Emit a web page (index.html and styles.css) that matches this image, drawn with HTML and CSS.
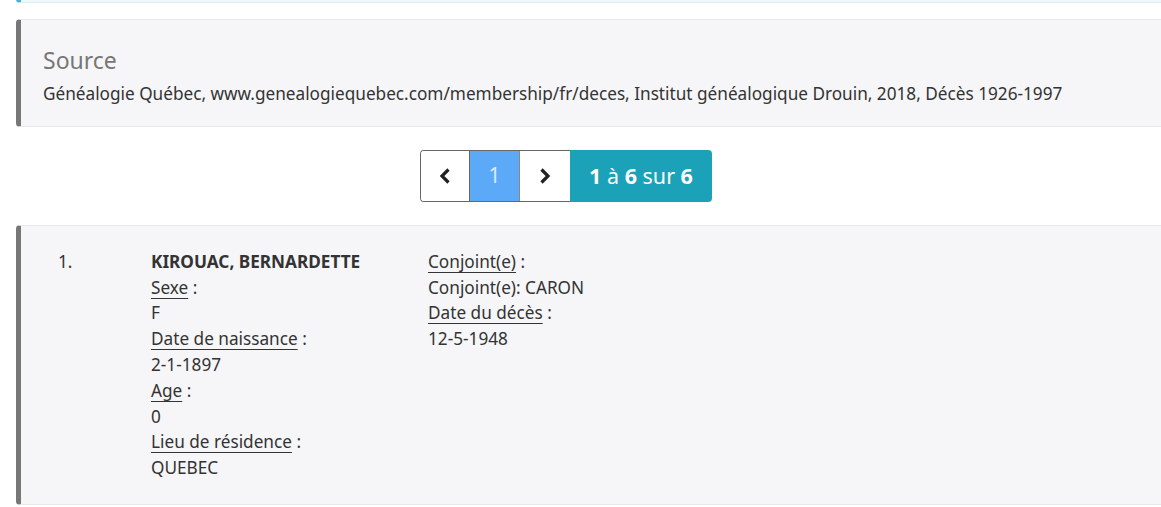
FILE: index.html
```html
<!DOCTYPE html>
<html lang="fr">
<head>
    <meta charset="UTF-8">
    <title>Décès 1926-1997</title>
    <link rel="stylesheet" href="styles.css">
</head>
<body>
    <div class="page">
        <div class="callout callout-info"></div>

        <div class="callout">
            <h4>Source</h4>
            <p>Généalogie Québec, www.genealogiequebec.com/membership/fr/deces, Institut généalogique Drouin, 2018, Décès 1926-1997</p>
        </div>

        <div class="pager">
            <div class="pager-group">
                <span class="pager-btn">
                    <svg width="16" height="20" viewBox="0 0 16 20"><polyline points="11.5,3.5 5,10 11.5,16.5" fill="none" stroke="#222" stroke-width="3.2"/></svg>
                </span>
                <span class="pager-btn active">1</span>
                <span class="pager-btn">
                    <svg width="16" height="20" viewBox="0 0 16 20"><polyline points="4.5,3.5 11,10 4.5,16.5" fill="none" stroke="#222" stroke-width="3.2"/></svg>
                </span>
            </div>
            <span class="pager-count"><span><b>1</b> à <b>6</b> sur <b>6</b></span></span>
        </div>

        <div class="callout record">
            <div class="rec-num">1.</div>
            <div class="rec-col">
                <div class="rec-name">KIROUAC, BERNARDETTE</div>
                <div><span class="lbl">Sexe</span> :</div>
                <div>F</div>
                <div><span class="lbl">Date de naissance</span> :</div>
                <div>2-1-1897</div>
                <div><span class="lbl">Age</span> :</div>
                <div>0</div>
                <div><span class="lbl">Lieu de résidence</span> :</div>
                <div>QUEBEC</div>
            </div>
            <div class="rec-col">
                <div><span class="lbl">Conjoint(e)</span> :</div>
                <div>Conjoint(e): CARON</div>
                <div><span class="lbl">Date du décès</span> :</div>
                <div>12-5-1948</div>
            </div>
        </div>
    </div>
</body>
</html>
```

FILE: styles.css
```css
* {
    margin: 0;
    padding: 0;
    box-sizing: border-box;
}

body {
    font-family: 'Noto Sans', 'Open Sans', sans-serif;
    font-size: 17.2px;
    line-height: 25.8px;
    color: #333;
    background: #fff;
    overflow: hidden;
}

.page {
    width: 1100px;
    margin-left: 16px;
}

.callout {
    margin-right: -80px;
    background-color: #f6f6f8;
    border: 1px solid #e9e9ec;
    border-left: 5px solid #777;
    border-radius: 4px;
    padding: 27px 22px 19px 22px;
    margin-bottom: 23px;
}

.callout-info {
    height: 4px;
    padding: 0;
    margin-top: -1px;
    margin-bottom: 16px;
    background-color: #eef7fc;
    border-color: #d9eef8;
    border-left-color: #45b5d6;
    border-top: none;
    border-radius: 0 0 0 4px;
}

.callout h4 {
    font-size: 23px;
    font-weight: 400;
    line-height: 27.6px;
    color: #777;
    margin-bottom: 6.5px;
}

.pager {
    display: flex;
    justify-content: center;
    height: 52px;
    margin-bottom: 23px;
}

.pager-group {
    display: flex;
    border: 1px solid #666;
    border-right: none;
    border-radius: 4px 0 0 4px;
    overflow: hidden;
}

.pager-btn {
    width: 50px;
    display: flex;
    align-items: center;
    justify-content: center;
    background: #fff;
    font-size: 21px;
    border-right: 1px solid #666;
}

.pager-btn:first-child {
    width: 49px;
}

.pager-btn:last-child {
    border-right: none;
}

.pager-btn.active {
    background: #5ca9f7;
    color: #dbeafe;
    border-right-color: #888;
}

.pager-count {
    display: flex;
    align-items: center;
    justify-content: center;
    width: 142px;
    background: #1ba2b8;
    color: #fff;
    font-size: 21.5px;
    border-radius: 0 4px 4px 0;
}

.pager-count b {
    font-weight: 700;
}

.record {
    display: grid;
    grid-template-columns: 93px 277px auto;
    padding: 23px 22px 23px 37px;
}

.rec-name {
    font-weight: 700;
}

.lbl {
    text-decoration: underline;
    text-underline-offset: 4px;
}
```
